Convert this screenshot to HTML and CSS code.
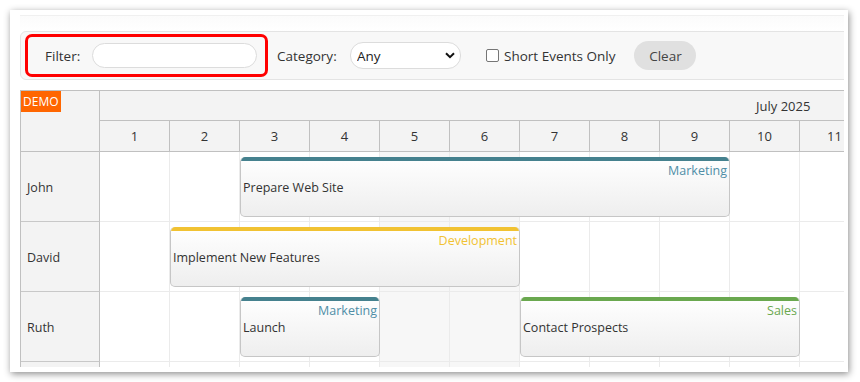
FILE: index.html
```html
<!DOCTYPE html>
<html>
<head>
<meta charset="utf-8">
<link rel="stylesheet" href="styles.css">
</head>
<body>
<div class="window">
  <div class="viewport">
    <div class="toolbar">
      <div class="filter-box">
        <label class="lbl lbl-filter">Filter:</label>
        <input class="search" type="text">
      </div>
      <label class="lbl lbl-cat">Category:</label>
      <div class="select-wrap">
        <select class="select"><option>Any</option></select>
        <svg class="chev" width="10" height="7" viewBox="0 0 10 7"><path d="M1 1.2 L5 5.2 L9 1.2" fill="none" stroke="#111" stroke-width="2"/></svg>
      </div>
      <label class="check"><span class="box"></span><span>Short Events Only</span></label>
      <button class="clear">Clear</button>
    </div>

    <div class="scheduler">
      <div class="header">
        <div class="corner"><span class="demo">DEMO</span></div>
        <div class="month"><span class="month-text">July 2025</span></div>
        <div class="day">1</div>
        <div class="day">2</div>
        <div class="day">3</div>
        <div class="day">4</div>
        <div class="day">5</div>
        <div class="day">6</div>
        <div class="day">7</div>
        <div class="day">8</div>
        <div class="day">9</div>
        <div class="day">10</div>
        <div class="day">11</div>
      </div>

      <div class="row">
        <div class="rowhead">John</div>
        <div class="cells">
          <div class="cell"></div><div class="cell"></div><div class="cell"></div><div class="cell"></div>
          <div class="cell weekend"></div><div class="cell weekend"></div>
          <div class="cell"></div><div class="cell"></div><div class="cell"></div><div class="cell"></div><div class="cell"></div>
        </div>
        <div class="event ev-marketing" style="grid-column: 4 / 11">
          <div class="ev-cat">Marketing</div>
          <div class="ev-text">Prepare Web Site</div>
        </div>
      </div>

      <div class="row">
        <div class="rowhead">David</div>
        <div class="cells">
          <div class="cell"></div><div class="cell"></div><div class="cell"></div><div class="cell"></div>
          <div class="cell weekend"></div><div class="cell weekend"></div>
          <div class="cell"></div><div class="cell"></div><div class="cell"></div><div class="cell"></div><div class="cell"></div>
        </div>
        <div class="event ev-development" style="grid-column: 3 / 8">
          <div class="ev-cat">Development</div>
          <div class="ev-text">Implement New Features</div>
        </div>
      </div>

      <div class="row">
        <div class="rowhead">Ruth</div>
        <div class="cells">
          <div class="cell"></div><div class="cell"></div><div class="cell"></div><div class="cell"></div>
          <div class="cell weekend"></div><div class="cell weekend"></div>
          <div class="cell"></div><div class="cell"></div><div class="cell"></div><div class="cell"></div><div class="cell"></div>
        </div>
        <div class="event ev-marketing" style="grid-column: 4 / 6">
          <div class="ev-cat">Marketing</div>
          <div class="ev-text">Launch</div>
        </div>
        <div class="event ev-sales" style="grid-column: 8 / 12">
          <div class="ev-cat">Sales</div>
          <div class="ev-text">Contact Prospects</div>
        </div>
      </div>

      <div class="row">
        <div class="rowhead"></div>
        <div class="cells">
          <div class="cell"></div><div class="cell"></div><div class="cell"></div><div class="cell"></div>
          <div class="cell weekend"></div><div class="cell weekend"></div>
          <div class="cell"></div><div class="cell"></div><div class="cell"></div><div class="cell"></div><div class="cell"></div>
        </div>
      </div>
    </div>
  </div>
</div>
</body>
</html>
```

FILE: styles.css
```css
* { box-sizing: border-box; }

html, body {
  margin: 0;
  padding: 0;
  background: #ffffff;
}

body {
  font-family: "Open Sans", "Noto Sans", sans-serif;
  color: #333333;
  width: 860px;
  height: 382px;
  overflow: hidden;
}

.window {
  margin: 10px 0 0 10px;
  width: 838px;
  height: 362px;
  background: #ffffff;
  box-shadow: 1px 2px 7px rgba(0, 0, 0, 0.45);
  padding: 5px 4px 5px 10px;
}

.viewport {
  width: 824px;
  height: 352px;
  overflow: hidden;
  border-top: 1px solid #f0f0f0;
  background: linear-gradient(to bottom, #fbfbfb, #ffffff 16px);
}

/* toolbar */
.toolbar {
  margin-top: 15px;
  width: 840px;
  height: 49px;
  background: #f8f8f8;
  border: 1px solid #e4e4e4;
  border-radius: 6px;
  display: flex;
  align-items: center;
  padding-left: 4px;
  font-size: 13.5px;
}

.filter-box {
  width: 243px;
  height: 43px;
  border: 3px solid #ff0000;
  border-radius: 7px;
  display: flex;
  align-items: center;
  padding-left: 17px;
}

.lbl {
  color: #333333;
}

.lbl-filter { width: 47px; }

.search {
  width: 165px;
  height: 25px;
  border: 1px solid #dcdcdc;
  border-radius: 13px;
  background: #ffffff;
  outline: none;
  padding: 0 8px;
}

.lbl-cat {
  margin-left: 9px;
  width: 73px;
}

.select-wrap {
  position: relative;
  width: 111px;
  height: 27px;
}

.select {
  appearance: none;
  -webkit-appearance: none;
  width: 111px;
  height: 27px;
  border: 1px solid #dcdcdc;
  border-radius: 13px;
  background: #ffffff;
  padding: 0 0 0 6px;
  font-family: "Open Sans", "Noto Sans", sans-serif;
  font-size: 13.5px;
  color: #222222;
  outline: none;
}

.chev {
  position: absolute;
  right: 6px;
  top: 10px;
  pointer-events: none;
}

.check {
  margin-left: 25px;
  display: flex;
  align-items: center;
  color: #333333;
}

.box {
  width: 13px;
  height: 13px;
  border: 1px solid #767676;
  border-radius: 2px;
  background: #ffffff;
  margin-right: 5px;
}

.clear {
  margin-left: 19px;
  width: 62px;
  height: 29px;
  border: none;
  border-radius: 15px;
  background: #e0e0e0;
  color: #444444;
  font-family: "Open Sans", "Noto Sans", sans-serif;
  font-size: 13.5px;
  padding: 0;
}

/* scheduler */
.scheduler {
  margin-top: 10px;
  width: 860px;
  border-left: 1px solid #c0c0c0;
  border-top: 1px solid #c0c0c0;
  font-size: 12.5px;
}

.header {
  display: grid;
  grid-template-columns: 79px repeat(11, 70px);
  grid-template-rows: 30px 31px;
  background: #f3f3f3;
}

.corner {
  grid-row: 1 / 3;
  grid-column: 1;
  border-right: 1px solid #c0c0c0;
  border-bottom: 1px solid #c0c0c0;
}

.demo {
  display: inline-block;
  background: #ff6600;
  color: #ffffff;
  font-size: 12px;
  line-height: 21px;
  padding: 0 2px;
}

.month {
  grid-row: 1;
  grid-column: 2 / 13;
  border-bottom: 1px solid #c0c0c0;
  display: flex;
  align-items: center;
  padding-left: 656px;
  font-size: 13px;
  color: #333333;
}

.day {
  grid-row: 2;
  border-right: 1px solid #c0c0c0;
  border-bottom: 1px solid #c0c0c0;
  display: flex;
  align-items: center;
  justify-content: center;
  font-size: 13px;
  color: #333333;
}

.row {
  display: grid;
  grid-template-columns: 79px repeat(11, 70px);
  grid-template-rows: 70px;
}

.rowhead {
  grid-row: 1;
  grid-column: 1;
  background: #f3f3f3;
  border-right: 1px solid #c0c0c0;
  border-bottom: 1px solid #c8c8c8;
  display: flex;
  align-items: center;
  padding-left: 6px;
  padding-top: 1px;
  font-size: 12.5px;
  color: #333333;
}

.cells {
  grid-row: 1;
  grid-column: 2 / 13;
  display: flex;
}

.cell {
  flex: 0 0 70px;
  border-right: 1px solid #ebebeb;
  border-bottom: 1px solid #ebebeb;
  background: #ffffff;
}

.cell.weekend { background: #f7f7f7; }

.event {
  grid-row: 1;
  margin: 5px 0 5px 0;
  border: 1px solid #c6c6c6;
  border-top-width: 0;
  border-radius: 5px;
  background: linear-gradient(to bottom, #ffffff, #eeeeee);
  font-size: 12.5px;
  line-height: 17px;
  padding-top: 5px;
  position: relative;
  overflow: hidden;
}

.event::before {
  content: "";
  position: absolute;
  left: -1px;
  right: -1px;
  top: 0;
  height: 4px;
  border-radius: 5px 5px 0 0;
  background: var(--ev-color);
}

.ev-cat {
  text-align: right;
  padding-right: 2px;
  color: var(--ev-text);
}

.ev-text {
  padding-left: 2px;
  color: #333333;
}

.ev-marketing { --ev-color: #45818e; --ev-text: #4f8ea7; }
.ev-development { --ev-color: #f1c232; --ev-text: #f1c232; }
.ev-sales { --ev-color: #6aa84f; --ev-text: #6aa84f; }
```
